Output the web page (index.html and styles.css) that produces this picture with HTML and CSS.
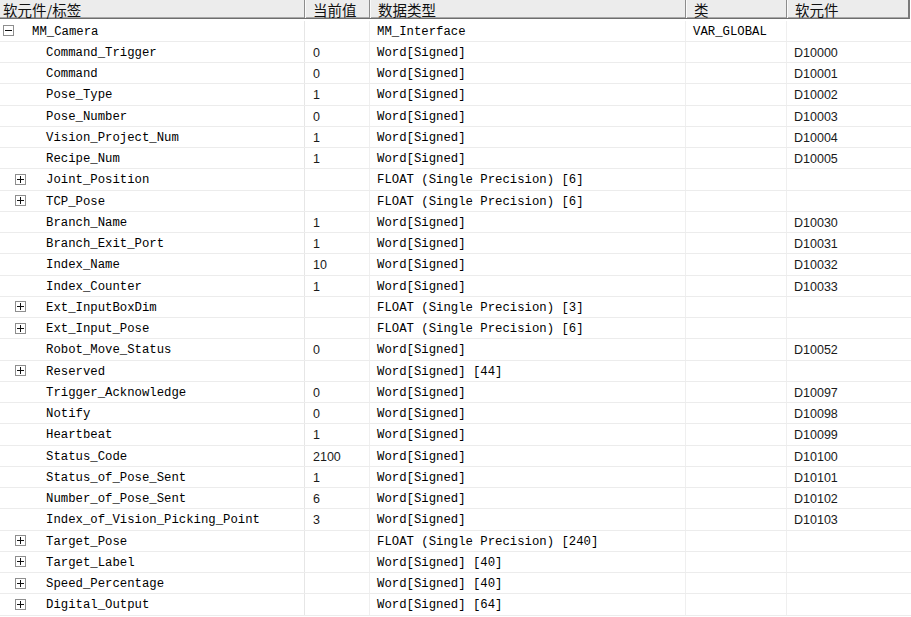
FILE: index.html
```html
<!DOCTYPE html>
<html lang="zh">
  <head>
    <meta charset="UTF-8" />
    <title>软元件/标签</title>
    <link rel="stylesheet" href="styles.css">
  </head>
  <body>
    <div class="grid">
      <!-- Header -->
      <div class="head">
        <div class="hcell first">软元件/标签</div>
        <div class="hcell">当前值</div>
        <div class="hcell">数据类型</div>
        <div class="hcell">类</div>
        <div class="hcell last">软元件</div>
      </div>

      <div class="body">
        <div class="row">
          <div class="cell name lvl0"><span class="box minus"></span>MM_Camera</div>
          <div class="cell val"></div>
          <div class="cell type">MM_Interface</div>
          <div class="cell cls">VAR_GLOBAL</div>
          <div class="cell dev"></div>
        </div>
        <div class="row">
          <div class="cell name leaf">Command_Trigger</div>
          <div class="cell val">0</div>
          <div class="cell type">Word[Signed]</div>
          <div class="cell cls"></div>
          <div class="cell dev">D10000</div>
        </div>
        <div class="row">
          <div class="cell name leaf">Command</div>
          <div class="cell val">0</div>
          <div class="cell type">Word[Signed]</div>
          <div class="cell cls"></div>
          <div class="cell dev">D10001</div>
        </div>
        <div class="row">
          <div class="cell name leaf">Pose_Type</div>
          <div class="cell val">1</div>
          <div class="cell type">Word[Signed]</div>
          <div class="cell cls"></div>
          <div class="cell dev">D10002</div>
        </div>
        <div class="row">
          <div class="cell name leaf">Pose_Number</div>
          <div class="cell val">0</div>
          <div class="cell type">Word[Signed]</div>
          <div class="cell cls"></div>
          <div class="cell dev">D10003</div>
        </div>
        <div class="row">
          <div class="cell name leaf">Vision_Project_Num</div>
          <div class="cell val">1</div>
          <div class="cell type">Word[Signed]</div>
          <div class="cell cls"></div>
          <div class="cell dev">D10004</div>
        </div>
        <div class="row">
          <div class="cell name leaf">Recipe_Num</div>
          <div class="cell val">1</div>
          <div class="cell type">Word[Signed]</div>
          <div class="cell cls"></div>
          <div class="cell dev">D10005</div>
        </div>
        <div class="row">
          <div class="cell name lvl1"><span class="box plus"></span>Joint_Position</div>
          <div class="cell val"></div>
          <div class="cell type">FLOAT (Single Precision) [6]</div>
          <div class="cell cls"></div>
          <div class="cell dev"></div>
        </div>
        <div class="row">
          <div class="cell name lvl1"><span class="box plus"></span>TCP_Pose</div>
          <div class="cell val"></div>
          <div class="cell type">FLOAT (Single Precision) [6]</div>
          <div class="cell cls"></div>
          <div class="cell dev"></div>
        </div>
        <div class="row">
          <div class="cell name leaf">Branch_Name</div>
          <div class="cell val">1</div>
          <div class="cell type">Word[Signed]</div>
          <div class="cell cls"></div>
          <div class="cell dev">D10030</div>
        </div>
        <div class="row">
          <div class="cell name leaf">Branch_Exit_Port</div>
          <div class="cell val">1</div>
          <div class="cell type">Word[Signed]</div>
          <div class="cell cls"></div>
          <div class="cell dev">D10031</div>
        </div>
        <div class="row">
          <div class="cell name leaf">Index_Name</div>
          <div class="cell val">10</div>
          <div class="cell type">Word[Signed]</div>
          <div class="cell cls"></div>
          <div class="cell dev">D10032</div>
        </div>
        <div class="row">
          <div class="cell name leaf">Index_Counter</div>
          <div class="cell val">1</div>
          <div class="cell type">Word[Signed]</div>
          <div class="cell cls"></div>
          <div class="cell dev">D10033</div>
        </div>
        <div class="row">
          <div class="cell name lvl1"><span class="box plus"></span>Ext_InputBoxDim</div>
          <div class="cell val"></div>
          <div class="cell type">FLOAT (Single Precision) [3]</div>
          <div class="cell cls"></div>
          <div class="cell dev"></div>
        </div>
        <div class="row">
          <div class="cell name lvl1"><span class="box plus"></span>Ext_Input_Pose</div>
          <div class="cell val"></div>
          <div class="cell type">FLOAT (Single Precision) [6]</div>
          <div class="cell cls"></div>
          <div class="cell dev"></div>
        </div>
        <div class="row">
          <div class="cell name leaf">Robot_Move_Status</div>
          <div class="cell val">0</div>
          <div class="cell type">Word[Signed]</div>
          <div class="cell cls"></div>
          <div class="cell dev">D10052</div>
        </div>
        <div class="row">
          <div class="cell name lvl1"><span class="box plus"></span>Reserved</div>
          <div class="cell val"></div>
          <div class="cell type">Word[Signed] [44]</div>
          <div class="cell cls"></div>
          <div class="cell dev"></div>
        </div>
        <div class="row">
          <div class="cell name leaf">Trigger_Acknowledge</div>
          <div class="cell val">0</div>
          <div class="cell type">Word[Signed]</div>
          <div class="cell cls"></div>
          <div class="cell dev">D10097</div>
        </div>
        <div class="row">
          <div class="cell name leaf">Notify</div>
          <div class="cell val">0</div>
          <div class="cell type">Word[Signed]</div>
          <div class="cell cls"></div>
          <div class="cell dev">D10098</div>
        </div>
        <div class="row">
          <div class="cell name leaf">Heartbeat</div>
          <div class="cell val">1</div>
          <div class="cell type">Word[Signed]</div>
          <div class="cell cls"></div>
          <div class="cell dev">D10099</div>
        </div>
        <div class="row">
          <div class="cell name leaf">Status_Code</div>
          <div class="cell val">2100</div>
          <div class="cell type">Word[Signed]</div>
          <div class="cell cls"></div>
          <div class="cell dev">D10100</div>
        </div>
        <div class="row">
          <div class="cell name leaf">Status_of_Pose_Sent</div>
          <div class="cell val">1</div>
          <div class="cell type">Word[Signed]</div>
          <div class="cell cls"></div>
          <div class="cell dev">D10101</div>
        </div>
        <div class="row">
          <div class="cell name leaf">Number_of_Pose_Sent</div>
          <div class="cell val">6</div>
          <div class="cell type">Word[Signed]</div>
          <div class="cell cls"></div>
          <div class="cell dev">D10102</div>
        </div>
        <div class="row">
          <div class="cell name leaf">Index_of_Vision_Picking_Point</div>
          <div class="cell val">3</div>
          <div class="cell type">Word[Signed]</div>
          <div class="cell cls"></div>
          <div class="cell dev">D10103</div>
        </div>
        <div class="row">
          <div class="cell name lvl1"><span class="box plus"></span>Target_Pose</div>
          <div class="cell val"></div>
          <div class="cell type">FLOAT (Single Precision) [240]</div>
          <div class="cell cls"></div>
          <div class="cell dev"></div>
        </div>
        <div class="row">
          <div class="cell name lvl1"><span class="box plus"></span>Target_Label</div>
          <div class="cell val"></div>
          <div class="cell type">Word[Signed] [40]</div>
          <div class="cell cls"></div>
          <div class="cell dev"></div>
        </div>
        <div class="row">
          <div class="cell name lvl1"><span class="box plus"></span>Speed_Percentage</div>
          <div class="cell val"></div>
          <div class="cell type">Word[Signed] [40]</div>
          <div class="cell cls"></div>
          <div class="cell dev"></div>
        </div>
        <div class="row">
          <div class="cell name lvl1"><span class="box plus"></span>Digital_Output</div>
          <div class="cell val"></div>
          <div class="cell type">Word[Signed] [64]</div>
          <div class="cell cls"></div>
          <div class="cell dev"></div>
        </div>
      </div>
    </div>
  </body>
</html>
```

FILE: styles.css
```css
body {
  margin: 0;
  padding: 0;
  background: #fff;
  color: #000;
  overflow: hidden;
}
.grid {
  width: 911px;
}
.head,
.row {
  display: grid;
  grid-template-columns: 305px 65px 316px 101px 122px;
}
.head {
  height: 19px;
  box-sizing: border-box;
  background: #ececec;
  border-bottom: 1px solid #6e6e6e;
  box-shadow: inset 0 -1px 0 #a8a8a8;
  width: 910px;
  border-right: 2px solid #7a7a7a;
  font-family: "Noto Sans CJK SC", sans-serif;
  font-size: 14.5px;
  line-height: 16px;
}
.hcell {
  padding-left: 7px;
  padding-top: 2px;
  border-left: 1px solid #fafafa;
  border-right: 1px solid #8c8c8c;
  white-space: nowrap;
  color: #111;
}
.hcell.first {
  padding-left: 3px;
  border-left: none;
}
.hcell.last {
  border-right: none;
}
.body {
  padding-top: 1.5px;
}
.row {
  height: 21.25px;
  box-sizing: border-box;
  border-bottom: 1px solid #ececec;
}
.cell {
  display: flex;
  align-items: center;
  padding-left: 7px;
  padding-top: 2px;
  border-right: 1px solid #efefef;
  white-space: nowrap;
  overflow: hidden;
  font-family: "Liberation Mono", monospace;
  font-size: 12.3px;
  color: #000;
}
.cell.name {
  padding-left: 46px;
  border-right-color: #e6e6e6;
}
.cell.lvl0 {
  padding-left: 3px;
}
.cell.lvl1 {
  padding-left: 15px;
}
.cell.val,
.cell.dev {
  font-family: "Liberation Sans", sans-serif;
  font-size: 12.5px;
  color: #1a1a1a;
}
.cell.val {
  padding-left: 8px;
}
.cell.dev {
  border-right: none;
}

/* tree expand/collapse boxes */
.box {
  position: relative;
  width: 11px;
  height: 11px;
  box-sizing: border-box;
  border: 1px solid #8e8e8e;
  background: #fff;
  flex: none;
  margin-right: 18px;
  margin-top: -2px;
}
.lvl1 .box {
  margin-right: 20px;
}
.box::before,
.box::after {
  content: "";
  position: absolute;
  background: #111;
}
.box::before {
  left: 1px;
  right: 1px;
  top: 4px;
  height: 1px;
}
.box.plus::after {
  top: 1px;
  bottom: 1px;
  left: 4px;
  width: 1px;
}
```
